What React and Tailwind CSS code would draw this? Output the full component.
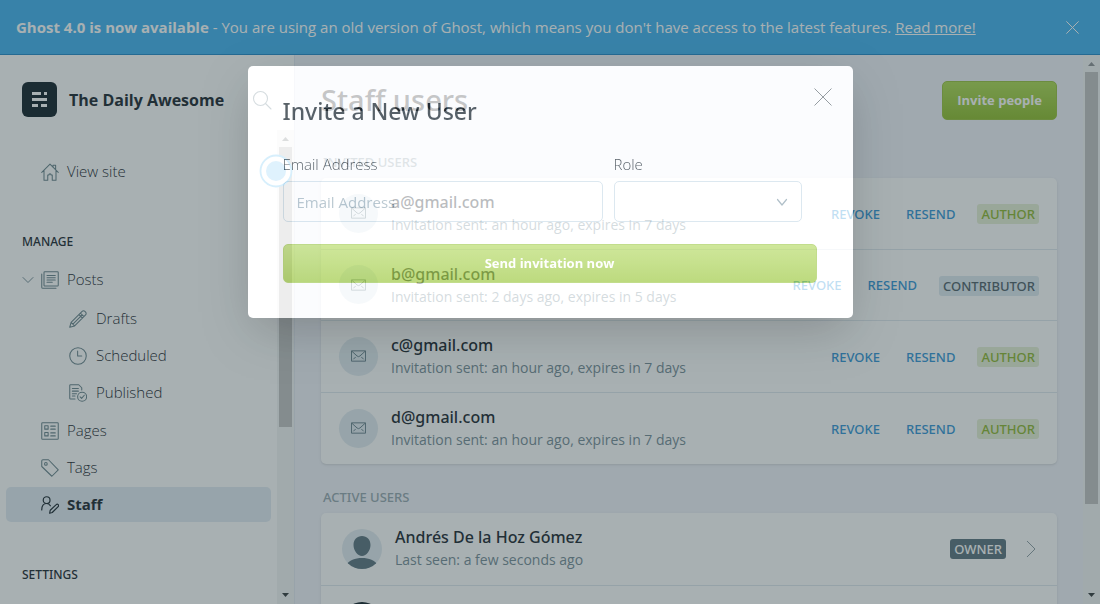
import React from "react";

function Icon({ size = 18, box = 24, width = 1.4, className = "", children }) {
  return (
    <svg
      width={size}
      height={size}
      viewBox={`0 0 ${box} ${box}`}
      fill="none"
      stroke="currentColor"
      strokeWidth={width}
      strokeLinecap="round"
      strokeLinejoin="round"
      className={`shrink-0 ${className}`}
      aria-hidden="true"
    >
      {children}
    </svg>
  );
}

const HomeIcon = () => (
  <Icon>
    <path d="M1 12.500 12 1.500l11 11M4 10v13h5v-7h1.500a1.500 1.500 0 0 1 3 0H15v7h5V10M16 5.500V3h3.500v6" />
  </Icon>
);
const PostsIcon = () => (
  <Icon>
    <rect x="4" y="1" width="19" height="19" rx="1" />
    <path d="M1 4v17.500a1.500 1.500 0 0 0 1.500 1.500H20M8 6h11M8 9h11M8 12h11M8 15h7" />
  </Icon>
);
const PencilIcon = () => (
  <Icon>
    <path d="M1 23l1.800-6.500L17.500 1.900a2.600 2.600 0 0 1 3.700 0l.9.9a2.600 2.600 0 0 1 0 3.700L7.500 21.200zM2.800 16.500l4.700 4.700M15.300 4.100l4.600 4.600M17.600 6.400 5.200 18.800M13.300 6.100l4.600 4.600" />
  </Icon>
);
const ClockIcon = () => (
  <Icon>
    <circle cx="12" cy="12" r="11" />
    <path d="M11.500 5.500V12H17" />
  </Icon>
);
const PublishedIcon = () => (
  <Icon>
    <path d="M8 20H2a1 1 0 0 1-1-1V2a1 1 0 0 1 1-1h11l4 4v3M4.500 6h8M4.500 9.500h8M4.500 13H10M4.500 16H8" />
    <circle cx="17.500" cy="17" r="6" />
    <path d="m14.800 17.200 2 2 3.600-4.200" />
  </Icon>
);
const PagesIcon = () => (
  <Icon>
    <rect x="1" y="1" width="22" height="22" rx="1" />
    <path d="M5 5h4.500v4.500H5zM5 14h4.500v4.500H5zM13 5.500h6M13 9.500h6M13 14.500h6M13 18.500h6" />
  </Icon>
);
const TagIcon = () => (
  <Icon>
    <path d="M1 2.500A1.500 1.500 0 0 1 2.500 1H10l13 13.500-8.500 8.500L1 10z" />
    <circle cx="6.500" cy="6.500" r="1.800" />
  </Icon>
);
const StaffIcon = () => (
  <Icon width={1.6}>
    <circle cx="7.500" cy="5.500" r="4.500" />
    <path d="M1 18.500c0-5 2.500-8.500 6.500-8.500 2.500 0 4 1 5 3M11.500 23l.8-4 8-7.500a1.800 1.800 0 0 1 2.600 2.600L15 22l-3.500 1" />
  </Icon>
);
const MailIcon = () => (
  <svg width="15" height="12" viewBox="0 0 16 12" fill="none" stroke="currentColor" aria-hidden="true">
    <path d="M.5.5h15v11H.5zM1 1l5.500 5a2.200 2.200 0 0 0 3 0L15 1M2.500 9.500 5 7M13.500 9.500 11 7" />
  </svg>
);
const CloseIcon = ({ size }) => (
  <svg width={size} height={size} viewBox="0 0 18 18" stroke="currentColor" aria-hidden="true">
    <path d="m.5.5 17 17M17.500.5.5 17.500" vectorEffect="non-scaling-stroke" />
  </svg>
);

const heading = "leading-4 uppercase";
const medium = "font-['Noto_Sans','Open_Sans',sans-serif] font-medium";

function NavLink({ icon, label, nested, active, open }) {
  return (
    <a
      href={`#${label}`}
      className={`flex items-center rounded-[5px] text-[15px] ${nested ? "h-[37px] pl-[63px]" : "h-[35px] pl-4"} ${
        active ? "bg-[#e2ebf3] font-bold text-[#15212a]" : "font-light text-[#15212a]"
      }`}
    >
      {!nested && (
        <span className="w-[19px] shrink-0 text-[#738a94]">
          {open && (
            <Icon size={12} box={12} width={1}>
              <path d="m1 3.500 5 5 5-5" />
            </Icon>
          )}
        </span>
      )}
      <span className={active ? "text-[#15212a]" : "text-[#668089]"}>{icon}</span>
      <span className={nested ? "pl-[9px]" : "pl-2"}>{label}</span>
    </a>
  );
}

function Scrollbar({ thumb, rest }) {
  return (
    <div className="flex w-[17px] shrink-0 flex-col items-center bg-[#f3f4f5]" aria-hidden="true">
      <svg width="17" height="17" className="shrink-0" fill="#8b8f92">
        <path d="M5 11h7L8.500 7z" />
      </svg>
      <div className={`w-[13px] bg-[#c1c1c1] ${thumb}`} />
      <div className={rest} />
      <svg width="17" height="17" className="shrink-0" fill="#303638">
        <path d="M5 6h7l-3.500 4z" />
      </svg>
    </div>
  );
}

function Sidebar() {
  return (
    <aside className="relative flex w-[295px] shrink-0 flex-col border-r border-[#e3e8f2] bg-white">
      <div className="flex h-[75px] shrink-0 items-center pt-3.5 pr-[22px] pl-[22px]">
        <svg width="35" height="35" viewBox="0 0 35 35" className="shrink-0" aria-hidden="true">
          <rect width="35" height="35" rx="6" fill="#0b1a23" />
          <path
            d="M10 11.500h9M22 11.500h3M10 17.500h15M10 23.500h6M19 23.500h6"
            stroke="#fff"
            strokeWidth="3"
          />
        </svg>
        <span className="flex-1 pl-3 text-[16px] font-bold text-[#15212a]">The Daily Awesome</span>
        <button type="button" aria-label="Search" className="text-[#738a94]">
          <Icon size={20} box={20} width={1.1}>
            <circle cx="8.500" cy="8.500" r="7" />
            <path d="m13.500 13.500 5.500 5.500" />
          </Icon>
        </button>
      </div>
      <div className="flex min-h-0 flex-1">
        <nav className="flex-1 overflow-hidden px-1.5 pt-6">
          <NavLink icon={<HomeIcon />} label="View site" />
          <h2 className={`${heading} px-4 pt-[45px] pb-3 text-[12px] text-[#15212a] ${medium}`}>Manage</h2>
          <NavLink icon={<PostsIcon />} label="Posts" open />
          <div className="pt-[3px]">
            <NavLink icon={<PencilIcon />} label="Drafts" nested />
            <NavLink icon={<ClockIcon />} label="Scheduled" nested />
            <NavLink icon={<PublishedIcon />} label="Published" nested />
          </div>
          <div className="flex flex-col gap-0.5 pt-0.5">
            <NavLink icon={<PagesIcon />} label="Pages" />
            <NavLink icon={<TagIcon />} label="Tags" />
            <NavLink icon={<StaffIcon />} label="Staff" active />
          </div>
          <h2 className={`${heading} px-4 pt-[45px] pb-3 text-[12px] text-[#15212a] ${medium}`}>Settings</h2>
          <NavLink icon={<PagesIcon />} label="General" />
        </nav>
        <Scrollbar thumb="grow-[280]" rest="grow-[160]" />
      </div>
      <svg
        width="34"
        height="34"
        viewBox="0 0 34 34"
        className="absolute top-[99px] left-[259px]"
        aria-hidden="true"
      >
        <circle cx="17" cy="17" r="15.500" fill="#fff" stroke="#78c8f4" strokeWidth="1.800" />
        <circle cx="17" cy="17" r="10" fill="#94d2f7" />
      </svg>
    </aside>
  );
}

const badgeStyles = {
  Author: "bg-[#e6efd4] text-[#8bb52a]",
  Contributor: "bg-[#dde8f0] text-[#4c5c66]",
  Owner: "bg-[#58707c] text-white",
};

function Badge({ role }) {
  return (
    <span className={`rounded-[3px] px-1 text-[13px] leading-5 uppercase ${medium} ${badgeStyles[role]}`}>
      {role}
    </span>
  );
}

const invites = [
  { email: "a@gmail.com", sent: "an hour ago", expires: "7 days", role: "Author" },
  { email: "b@gmail.com", sent: "2 days ago", expires: "5 days", role: "Contributor" },
  { email: "c@gmail.com", sent: "an hour ago", expires: "7 days", role: "Author" },
  { email: "d@gmail.com", sent: "an hour ago", expires: "7 days", role: "Author" },
];

function InviteRow({ email, sent, expires, role }) {
  return (
    <li className="flex items-center border-b border-[#dfe7ed] px-[18px] last:border-b-0">
      <span className="grid size-[39px] shrink-0 place-items-center rounded-full bg-[#e2ebf1] text-[#5d7783]">
        <MailIcon />
      </span>
      <div className="flex-1 pl-[13px]">
        <h3 className={`text-[16px] leading-6 text-[#15212a] ${medium}`}>{email}</h3>
        <p className="text-[14px] leading-[22px] text-[#738a94]">
          Invitation sent: {sent}, expires in {expires}
        </p>
      </div>
      <div className="flex items-center pt-0.5 text-[13px] text-[#2f93d6]">
        <a href="#revoke" className={`pr-[26px] ${medium}`}>REVOKE</a>
        <a href="#resend" className={`pr-[22px] ${medium}`}>RESEND</a>
        <Badge role={role} />
      </div>
    </li>
  );
}

function ActiveRow({ name, seen, avatar, role }) {
  return (
    <li className="flex h-[73px] items-center border-b border-[#dfe7ed] px-[21px]">
      {avatar}
      <div className="flex-1 pb-0.5 pl-[13px]">
        <h3 className={`text-[16px] leading-6 text-[#15212a] ${medium}`}>{name}</h3>
        <p className="text-[14px] leading-[22px] text-[#738a94]">Last seen: {seen}</p>
      </div>
      <Badge role={role} />
      <svg width="10" height="18" viewBox="0 0 10 18" fill="none" stroke="#8b9aa2" className="ml-5" aria-hidden="true">
        <path d="m1 1 8 8-8 8" />
      </svg>
    </li>
  );
}

function Avatar({ dark }) {
  return (
    <svg width="40" height="40" viewBox="0 0 40 40" className="shrink-0 overflow-hidden rounded-full" aria-hidden="true">
      <rect width="40" height="40" fill={dark ? "#0b1a23" : "#e2ebf1"} />
      <path
        d="M20 7c5 0 8.500 3.600 8.500 9S24.500 27 20 27s-8.500-5.600-8.500-11S15 7 20 7zM4 36c3-4.500 9-7 16-7s13 2.500 16 7v6H4z"
        fill="#58707c"
      />
    </svg>
  );
}

function Staff() {
  const sectionTitle = `${heading} ${medium} px-0.5 text-[13px] text-[#94a5ae]`;
  return (
    <main className="flex min-w-0 flex-1 bg-[#f1f3fa]">
      <div className="flex-1 overflow-hidden px-[26px]">
        <header className="flex h-[91px] items-center justify-between">
          <h1 className={`pb-0.5 text-[29px] leading-9 text-[#3d4145] ${medium}`}>Staff users</h1>
          <button
            type="button"
            className="h-[39px] rounded-[5px] border border-[#97c13a] bg-linear-to-b from-[#acd94e] to-[#8ebc27] px-3.5 text-[13px] font-bold text-white"
          >
            Invite people
          </button>
        </header>
        <h2 className={`${sectionTitle} pt-2 pb-2`}>Invited users</h2>
        <ul className="grid h-[286px] auto-rows-fr rounded-[5px] bg-white shadow-sm">
          {invites.map((invite) => (
            <InviteRow key={invite.email} {...invite} />
          ))}
        </ul>
        <h2 className={`${sectionTitle} pt-[25px] pb-2`}>Active users</h2>
        <ul className="rounded-[5px] bg-white shadow-sm">
          <ActiveRow name="Andrés De la Hoz Gómez" seen="a few seconds ago" role="Owner" avatar={<Avatar />} />
          <ActiveRow name="John" seen="a day ago" role="Author" avatar={<Avatar dark />} />
        </ul>
      </div>
      <Scrollbar thumb="grow-[432]" rest="grow-[83]" />
    </main>
  );
}

function InviteModal() {
  const label = "text-[15px] leading-6 font-light text-[#15212a]";
  const field = "h-[41px] rounded-[5px] border border-[#cddeea] bg-white/20 px-[13px] text-[15px]";
  return (
    <div className="fixed inset-0 flex items-start justify-center pt-[66px]">
      <section
        role="dialog"
        aria-labelledby="invite-title"
        className="w-[605px] rounded-[5px] bg-white pt-[22px] pr-9 pb-[35px] pl-[35px] opacity-70 shadow-[0_16px_46px_-6px_rgba(0,0,0,0.34),0_0_0_200vmax_rgba(50,69,74,0.607)]"
      >
        <header className="flex items-start justify-between">
          <h2 id="invite-title" className={`pt-[5px] text-[23px] leading-9 text-[#15212a] ${medium}`}>
            Invite a New User
          </h2>
          <button type="button" aria-label="Close" className="-mr-[15px] text-[#6f787d]">
            <CloseIcon size={18} />
          </button>
        </header>
        <form className="pt-[23px]" onSubmit={(event) => event.preventDefault()}>
          <div className="flex gap-[11px] pr-[15px]">
            <div className="flex w-[320px] flex-col gap-[5px]">
              <label htmlFor="email" className={label}>Email Address</label>
              <input id="email" type="email" placeholder="Email Address" className={`${field} placeholder:text-[#9fb3bf]`} />
            </div>
            <div className="relative flex flex-1 flex-col gap-[5px]">
              <label htmlFor="role" className={label}>Role</label>
              <select id="role" defaultValue="" className={`${field} appearance-none`}>
                <option value=""></option>
                <option>Contributor</option>
                <option>Author</option>
              </select>
              <Icon size={12} box={12} width={1.2} className="pointer-events-none absolute right-3.5 bottom-3.5 text-[#8fa5b2]">
                <path d="m1.500 3.500 4.500 5.500 4.500-5.500" />
              </Icon>
            </div>
          </div>
          <button
            type="submit"
            className="mt-[22px] h-[39px] w-full rounded-[5px] border border-[#a9cf5c] bg-linear-to-b from-[#bbdd70] to-[#a1cb48] text-[13px] font-bold text-white"
          >
            Send invitation now
          </button>
        </form>
      </section>
    </div>
  );
}

export default function App() {
  return (
    <div className="flex h-screen flex-col overflow-hidden font-['Open_Sans','Noto_Sans',sans-serif]">
      <div className="flex h-[55px] shrink-0 items-center justify-between border-b border-[#1d86c8] bg-[#3eb0ef] pr-[21px] pl-4 text-[15px] text-white">
        <p>
          <strong>Ghost 4.0 is now available</strong> - You are using an old version of Ghost, which means you don't have
          access to the latest features. <a href="#more" className="underline">Read more!</a>
        </p>
        <button type="button" aria-label="Dismiss">
          <CloseIcon size={13} />
        </button>
      </div>
      <div className="flex min-h-0 flex-1">
        <Sidebar />
        <Staff />
      </div>
      <InviteModal />
    </div>
  );
}
